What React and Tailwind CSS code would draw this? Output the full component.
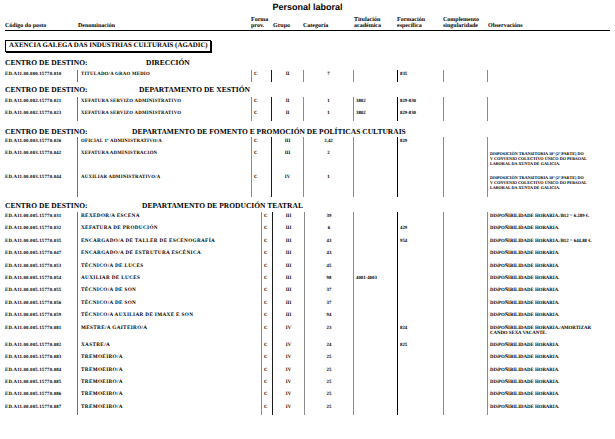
import React from 'react';

const upperCols = "grid grid-cols-[72px_174px_20px_32px_50px_44px_46px_44px_125px]";
const lowerCols = "grid grid-cols-[72px_184px_11px_32px_49px_44px_46px_44px_125px]";

const disposicion = ["DISPOSICIÓN TRANSITORIA 10ª (2ª PARTE) DO", "V CONVENIO COLECTIVO ÚNICO DO PERSOAL", "LABORAL DA XUNTA DE GALICIA."];
const disp = ["DISPOÑIBILIDADE HORARIA."];

const sections = [
  {
    name: "DIRECCIÓN",
    nameClass: "ml-[56px]",
    top: "mt-[2.5px]",
    tableTop: "mt-[3.5px]",
    cols: upperCols,
    rows: [
      { code: "ED.A11.00.000.15770.010", den: "TITULADO/A GRAO MEDIO", f: "C", g: "II", cat: "7", tit: "", form: "835", obs: [] },
    ],
  },
  {
    name: "DEPARTAMENTO DE XESTIÓN",
    nameClass: "ml-[49px]",
    top: "mt-[3px]",
    tableTop: "mt-[2.5px]",
    cols: upperCols,
    rows: [
      { code: "ED.A11.00.002.15770.021", den: "XEFATURA SERVIZO ADMINISTRATIVO", f: "C", g: "II", cat: "1", tit: "3802", form: "829-830", obs: [] },
      { code: "ED.A11.00.002.15770.023", den: "XEFATURA SERVIZO ADMINISTRATIVO", f: "C", g: "II", cat: "1", tit: "3802", form: "829-830", obs: [] },
    ],
  },
  {
    name: "DEPARTAMENTO DE FOMENTO E PROMOCIÓN DE POLÍTICAS CULTURAIS",
    nameClass: "ml-[42px]",
    top: "mt-[6px]",
    tableTop: "mt-[1.5px]",
    cols: upperCols,
    rows: [
      { code: "ED.A11.00.003.15770.026", den: "OFICIAL 1ª ADMINISTRATIVO/A", f: "C", g: "III", cat: "2,42", tit: "", form: "829", obs: [] },
      { code: "ED.A11.00.003.15770.042", den: "XEFATURA ADMINISTRACIÓN", f: "C", g: "III", cat: "2", tit: "", form: "", obs: disposicion, small: true },
      { code: "ED.A11.00.003.15770.044", den: "AUXILIAR ADMINISTRATIVO/A", f: "C", g: "IV", cat: "1", tit: "", form: "", obs: disposicion, small: true },
    ],
  },
  {
    name: "DEPARTAMENTO DE PRODUCIÓN TEATRAL",
    nameClass: "ml-[52px]",
    top: "mt-[4px]",
    tableTop: "mt-[2px]",
    cols: lowerCols,
    lower: true,
    rows: [
      { code: "ED.A11.00.005.15770.031", den: "REXEDOR/A ESCENA", f: "C", g: "III", cat: "39", tit: "", form: "", obs: ["DISPOÑIBILIDADE HORARIA./B12 = 6.289 €."] },
      { code: "ED.A11.00.005.15770.032", den: "XEFATURA DE PRODUCIÓN", f: "C", g: "III", cat: "6", tit: "", form: "429", obs: disp },
      { code: "ED.A11.00.005.15770.035", den: "ENCARGADO/A DE TALLER DE ESCENOGRAFÍA", f: "C", g: "III", cat: "43", tit: "", form: "954", obs: ["DISPOÑIBILIDADE HORARIA./B12 = 644,88 €."] },
      { code: "ED.A11.00.005.15770.047", den: "ENCARGADO/A DE ESTRUTURA ESCÉNICA", f: "C", g: "III", cat: "43", tit: "", form: "", obs: disp },
      { code: "ED.A11.00.005.15770.053", den: "TÉCNICO/A DE LUCES", f: "C", g: "III", cat: "45", tit: "", form: "", obs: disp },
      { code: "ED.A11.00.005.15770.054", den: "AUXILIAR DE LUCES", f: "C", g: "III", cat: "98", tit: "4001-4003", form: "", obs: disp },
      { code: "ED.A11.00.005.15770.055", den: "TÉCNICO/A DE SON", f: "C", g: "III", cat: "37", tit: "", form: "", obs: disp },
      { code: "ED.A11.00.005.15770.056", den: "TÉCNICO/A DE SON", f: "C", g: "III", cat: "37", tit: "", form: "", obs: disp },
      { code: "ED.A11.00.005.15770.059", den: "TÉCNICO/A AUXILIAR DE IMAXE E SON", f: "C", g: "III", cat: "94", tit: "", form: "", obs: disp },
      { code: "ED.A11.00.005.15770.081", den: "MESTRE/A GAITEIRO/A", f: "C", g: "IV", cat: "23", tit: "", form: "824", obs: ["DISPOÑIBILIDADE HORARIA./AMORTIZAR", "CANDO SEXA VACANTE."] },
      { code: "ED.A11.00.005.15770.082", den: "XASTRE/A", f: "C", g: "IV", cat: "24", tit: "", form: "825", obs: disp },
      { code: "ED.A11.00.005.15770.083", den: "TREMOEIRO/A", f: "C", g: "IV", cat: "25", tit: "", form: "", obs: disp },
      { code: "ED.A11.00.005.15770.084", den: "TREMOEIRO/A", f: "C", g: "IV", cat: "25", tit: "", form: "", obs: disp },
      { code: "ED.A11.00.005.15770.085", den: "TREMOEIRO/A", f: "C", g: "IV", cat: "25", tit: "", form: "", obs: disp },
      { code: "ED.A11.00.005.15770.086", den: "TREMOEIRO/A", f: "C", g: "IV", cat: "25", tit: "", form: "", obs: disp },
      { code: "ED.A11.00.005.15770.087", den: "TREMOEIRO/A", f: "C", g: "IV", cat: "25", tit: "", form: "", obs: disp },
    ],
  },
];

const Row = ({ row, cols, lower }) => {
  // rows with long observations get a bit more room below
  const pad = row.obs.length > 2 ? "pt-[2px] pb-[7px]" : lower ? "pt-[2px] pb-[5.4px]" : "pt-[2px] pb-[5px]";
  const cell = `${pad} border-l`;
  return (
    <div className={`${cols} text-[4.8px] leading-[5px] font-bold whitespace-nowrap`}>
      <div className={`${pad} tracking-[0.2px]`}>{row.code}</div>
      <div className={`${cell} border-[#6f6f6f] pl-[3px] ${lower ? "text-[5.2px] tracking-[0.35px]" : "tracking-[0.25px]"}`}>{row.den}</div>
      <div className={`${cell} border-[#8a8a8a] pl-[2px]`}>{row.f}</div>
      <div className={`${cell} border-[#1a1a1a] text-center`}>{row.g}</div>
      <div className={`${cell} border-[#8a8a8a] text-center`}>{row.cat}</div>
      <div className={`${cell} border-[#8a8a8a] pl-[2px]`}>{row.tit}</div>
      <div className={`${cell} border-[#000] pl-[2px]`}>{row.form}</div>
      <div className={`${cell} border-[#8a8a8a]`}></div>
      <div className={`${cell} border-[#8a8a8a] pl-[2px] ${row.small ? "text-[4.2px]" : ""}`}>
        {row.obs.map((l, i) => (
          <div key={i}>{l}</div>
        ))}
      </div>
    </div>
  );
};

const App = () => {
  return (
    <div className="w-[615px] h-[439px] bg-white text-black overflow-hidden font-['Liberation_Serif',serif] [text-rendering:geometricPrecision]">
      {/* titulo */}
      <div className="pt-[2px] h-[12px] text-center text-[9px] leading-[10px] font-bold font-['Liberation_Sans',sans-serif]">
        Personal laboral
      </div>

      <div className="px-[5px]">
        {/* cabeceira */}
        <div className={`${upperCols} h-[19px] items-end pb-[1px] border-b border-black text-[6px] leading-[6px] font-bold whitespace-nowrap`}>
          <div>Código do posto</div>
          <div className="pl-[1px]">Denominación</div>
          <div>Forma<br />prov.</div>
          <div className="pl-[2px]">Grupo</div>
          <div>Categoría</div>
          <div className="pl-[1px]">Titulación<br />académica</div>
          <div>Formación<br />específica</div>
          <div>Complemento<br />singularidade</div>
          <div className="pl-[1px]">Observacións</div>
        </div>

        {/* axencia */}
        <div className="mt-[9px] inline-block border border-black shadow-[1px_1px_0_#000] pl-[3px] pr-[2px] h-[12px] text-[6.9px] leading-[10px] font-bold">
          AXENCIA GALEGA DAS INDUSTRIAS CULTURAIS (AGADIC)
        </div>

        {sections.map((s) => (
          <div key={s.name}>
            <div className={`${s.top} flex text-[7.5px] leading-[9px] font-bold whitespace-nowrap`}>
              <span className="w-[85px] shrink-0">CENTRO DE DESTINO:</span>
              <span className={s.nameClass}>{s.name}</span>
            </div>
            <div className={s.tableTop}>
              {s.rows.map((r) => (
                <Row key={r.code} row={r} cols={s.cols} lower={s.lower} />
              ))}
            </div>
          </div>
        ))}
      </div>
    </div>
  );
};

export default App;
